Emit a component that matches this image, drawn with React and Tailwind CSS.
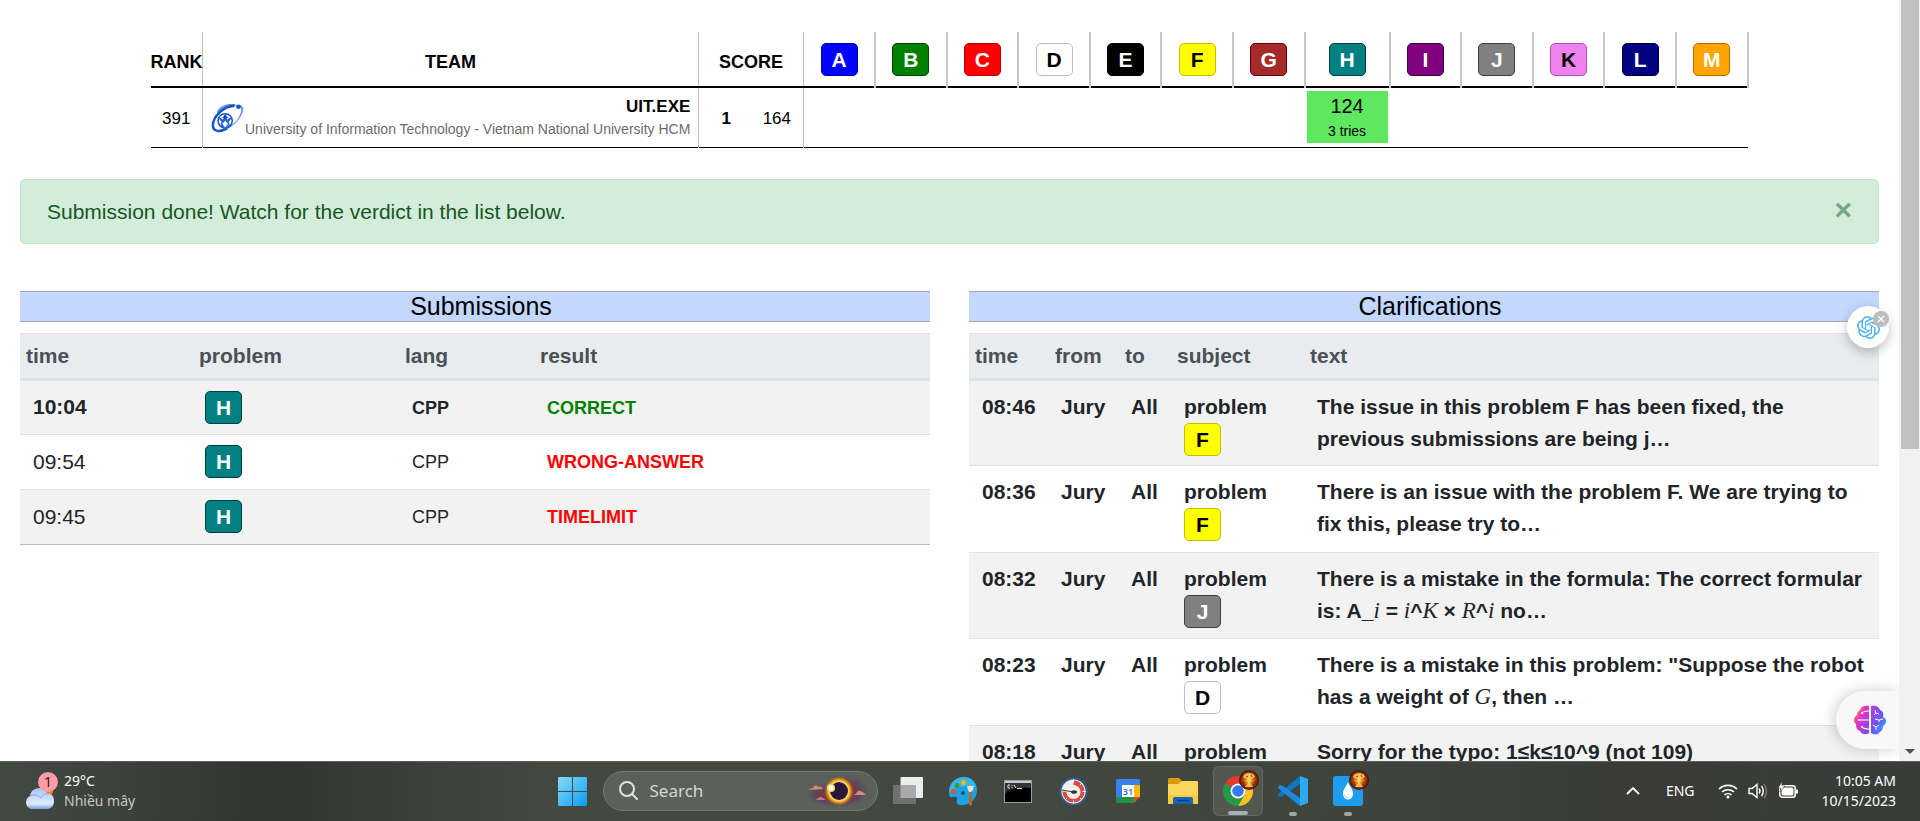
import React from "react";
import { SiOpenai } from "react-icons/si";

const BADGES = {
  A: "bg-[#0000ff] border-[#0000b3] text-white",
  B: "bg-[#008000] border-[#004000] text-white",
  C: "bg-[#ff0000] border-[#b30000] text-white",
  D: "bg-white border-[#bfbfbf] text-black",
  E: "bg-black border-black text-white",
  F: "bg-[#ffff00] border-[#bfbf00] text-black",
  G: "bg-[#a52a2a] border-[#6b0000] text-white",
  H: "bg-[#008080] border-[#004040] text-white",
  I: "bg-[#800080] border-[#400040] text-white",
  J: "bg-[#808080] border-[#404040] text-white",
  K: "bg-[#ee82ee] border-[#b350b3] text-black",
  L: "bg-[#000080] border-[#000040] text-white",
  M: "bg-[#ffa500] border-[#bf6900] text-white",
};

function Badge({ letter }) {
  return (
    <a
      href="#problem"
      className={
        "inline-flex h-[33px] w-[37px] items-center justify-center rounded-[5px] border align-middle text-[21px] font-bold leading-none " +
        BADGES[letter]
      }
    >
      {letter}
    </a>
  );
}

function UniversityLogo() {
  return (
    <svg viewBox="0 0 36 32" className="h-8 w-[34px] shrink-0" fill="none">
      <path d="M6 9C10 2 19 0 25 2c-7 1-13 5-16 11z" fill="#8fa9e6" />
      <path d="M7 10c5-6 11-9 19-8M7 13c4-6 10-9 17-9" stroke="#4f7be0" strokeWidth="1" />
      <path d="M25 3C14 3 2 14 2 24c0 7 8 7 15 3" stroke="#1552cc" strokeWidth="2.6" />
      <path d="M17 27c8-4 14-11 16-18" stroke="#8aa6ea" strokeWidth="1.4" />
      <path d="M24 3c7-2 11 0 10 5-1 4-3 7-6 10 2-4 4-7 4-10 0-4-3-5-8-5z" fill="#6f91e2" />
      <circle cx="29" cy="4" r="2.4" fill="#1552cc" />
      <circle cx="15" cy="19" r="7.5" stroke="#1552cc" strokeWidth="1.6" />
      <path d="M15 11l2 4 5 1-3 4 1 5-5 3-5-3 1-5-3-4 5-1z" fill="#2f66d6" />
      <path d="M15 19l3 3-3 4-3-4z" fill="#fff" />
      <path d="M10 15l3 2M20 15l-3 2" stroke="#fff" strokeWidth="1.2" />
      <circle cx="15" cy="15" r="1.6" fill="#0d3fa8" />
    </svg>
  );
}

const LETTERS = ["A", "B", "C", "D", "E", "F", "G", "H", "I", "J", "K", "L", "M"];

function Scoreboard() {
  return (
    <table className="mx-auto w-full max-w-[1598px] table-fixed border-collapse text-[17px] text-black">
      <colgroup>
        <col className="w-[52px]" />
        <col className="w-[496px]" />
        <col className="w-[55px]" />
        <col className="w-[50px]" />
        {LETTERS.map((l) => (
          <col key={l} className={l === "H" ? "w-[85px]" : ""} />
        ))}
      </colgroup>
      <thead>
        <tr className="h-[55px] border-b-2 border-black text-[18px] font-bold">
          <th className="whitespace-nowrap border-r border-[#c0c0c0] p-0 pt-[6px]">RANK</th>
          <th className="border-r border-[#c0c0c0] p-0 pt-[6px]">TEAM</th>
          <th colSpan={2} className="border-r border-[#c0c0c0] p-0 pt-[6px]">SCORE</th>
          {LETTERS.map((l) => (
            <th key={l} className="border-r-2 border-[#c8c8c8] p-0 align-middle">
              <Badge letter={l} />
            </th>
          ))}
        </tr>
      </thead>
      <tbody>
        <tr className="h-[60px] border-b border-black">
          <td className="border-r border-[#c0c0c0] p-0 pt-[2px] text-center">391</td>
          <td className="border-r border-[#c0c0c0] px-2 py-0 pt-[2px]">
            <div className="flex items-center justify-between">
              <UniversityLogo />
              <div className="text-right">
                <div className="font-bold leading-[22px]">UIT.EXE</div>
                <div className="whitespace-nowrap text-[14px] leading-[22px] text-[#6c6c6c]">
                  University of Information Technology - Vietnam National University HCM
                </div>
              </div>
            </div>
          </td>
          <td className="p-0 pt-[2px] text-center font-bold">1</td>
          <td className="border-r border-[#c0c0c0] p-0 pr-3 pt-[2px] text-right">164</td>
          {LETTERS.map((l) => (
            <td key={l} className="p-0">
              {l === "H" && (
                <div className="mx-[2px] h-[52px] bg-[#60e760] text-center text-[20px] leading-[30px]">
                  124
                  <div className="text-[14px] leading-[20px]">3 tries</div>
                </div>
              )}
            </td>
          ))}
        </tr>
      </tbody>
    </table>
  );
}

function Heading({ children }) {
  return (
    <h2 className="mb-[11px] h-[31px] border-y border-[#a3a7b0] bg-[#c3d7ff] pl-3 text-center text-[25px] leading-[29px] text-black">
      {children}
    </h2>
  );
}

const SUBMISSIONS = [
  { time: "10:04", verdict: "CORRECT", color: "text-[#008000]", fresh: true },
  { time: "09:54", verdict: "WRONG-ANSWER", color: "text-[#ff0000]" },
  { time: "09:45", verdict: "TIMELIMIT", color: "text-[#ff0000]" },
];

const HEAD_ROW = "h-[46px] border-t border-b-[3px] border-[#dee2e6] bg-[#e9ecef] text-left text-[#495057]";

function Submissions() {
  return (
    <section className="min-w-0 flex-1">
      <Heading>Submissions</Heading>
      <table className="w-full table-fixed border-collapse border-b border-[#b9bcbf]">
        <colgroup>
          <col className="w-[173px]" />
          <col className="w-[206px]" />
          <col className="w-[135px]" />
          <col />
        </colgroup>
        <thead>
          <tr className={HEAD_ROW}>
            {["time", "problem", "lang", "result"].map((h) => (
              <th key={h} className="px-[6px] py-0 font-bold">{h}</th>
            ))}
          </tr>
        </thead>
        <tbody>
          {SUBMISSIONS.map((s) => (
            <tr
              key={s.time}
              className={
                "h-[55px] border-b border-[#dee2e6] odd:bg-[#f2f2f2] last:border-[#b9bcbf] " +
                (s.fresh ? "font-bold" : "")
              }
            >
              <td className="px-[13px] py-0">{s.time}</td>
              <td className="px-3 py-0"><Badge letter="H" /></td>
              <td className="px-[13px] py-0 pt-[2px] text-[18px]">CPP</td>
              <td className={"px-[13px] py-0 pt-[2px] text-[18px] font-bold " + s.color}>{s.verdict}</td>
            </tr>
          ))}
        </tbody>
      </table>
    </section>
  );
}

function M({ children }) {
  return <i className="font-['Liberation_Serif',serif] text-[23px] font-normal leading-none">{children}</i>;
}

const CLARIFICATIONS = [
  {
    time: "08:46",
    letter: "F",
    lines: ["The issue in this problem F has been fixed, the", "previous submissions are being j…"],
  },
  {
    time: "08:36",
    letter: "F",
    lines: ["There is an issue with the problem F. We are trying to", "fix this, please try to…"],
  },
  {
    time: "08:32",
    letter: "J",
    lines: [
      "There is a mistake in the formula: The correct formular",
      <>is: A_<M>i</M> = <M>i</M>^<M>K</M> × <M>R</M>^<M>i</M> no…</>,
    ],
  },
  {
    time: "08:23",
    letter: "D",
    lines: ['There is a mistake in this problem: "Suppose the robot', <>has a weight of <M>G</M>, then …</>],
  },
  { time: "08:18", letter: "K", lines: ["Sorry for the typo: 1≤k≤10^9 (not 109)"] },
];

function Clarifications() {
  return (
    <section className="min-w-0 flex-1">
      <Heading>Clarifications</Heading>
      <table className="w-full table-fixed border-collapse">
        <colgroup>
          <col className="w-[80px]" />
          <col className="w-[70px]" />
          <col className="w-[52px]" />
          <col className="w-[133px]" />
          <col />
        </colgroup>
        <thead>
          <tr className={HEAD_ROW}>
            {["time", "from", "to", "subject", "text"].map((h) => (
              <th key={h} className="px-[6px] py-0 font-bold">{h}</th>
            ))}
          </tr>
        </thead>
        <tbody>
          {CLARIFICATIONS.map((c) => (
            <tr
              key={c.time}
              className="h-[86px] border-b border-[#dee2e6] align-top font-bold leading-8 odd:bg-[#f2f2f2] even:h-[87px]"
            >
              <td className="py-0 pl-[13px] pr-0 pt-[10px]">{c.time}</td>
              <td className="py-0 pl-3 pr-0 pt-[10px]">Jury</td>
              <td className="py-0 pl-3 pr-0 pt-[10px]">All</td>
              <td className="py-0 pl-[13px] pr-0 pt-[10px]">
                <div>problem</div>
                <div className="flex h-8"><Badge letter={c.letter} /></div>
              </td>
              <td className="whitespace-nowrap py-0 pl-[13px] pr-0 pt-[10px]">
                {c.lines.map((l, i) => (
                  <div key={i}>{l}</div>
                ))}
              </td>
            </tr>
          ))}
        </tbody>
      </table>
    </section>
  );
}

function Brain() {
  return (
    <svg viewBox="0 0 32 30" className="h-[30px] w-8">
      <defs>
        <linearGradient id="brainL" x1="0" y1="0" x2="1" y2="1">
          <stop offset="0" stopColor="#ffb000" />
          <stop offset=".4" stopColor="#e935c1" />
          <stop offset="1" stopColor="#6a4df5" />
        </linearGradient>
        <linearGradient id="brainR" x1="0" y1="0" x2="1" y2="1">
          <stop offset="0" stopColor="#c13be0" />
          <stop offset=".5" stopColor="#6a56f7" />
          <stop offset="1" stopColor="#22b8ff" />
        </linearGradient>
      </defs>
      <path d="M15 1c-4-1-8 0-9 4-2 1-3 3-3 5-4 3-4 7-1 9 0 4 1 6 4 7 2 4 6 4 9 2z" fill="url(#brainL)" />
      <path d="M17 1c4-1 8 0 9 4 3 1 4 4 3 7 4 2 4 6 0 9 0 3-1 5-3 6-2 3-6 3-9 1z" fill="url(#brainR)" />
      <path d="M15 15H5M15 6c-3 0-5 0-7 2M15 24c-3 0-5 0-7-2" stroke="#fff" strokeWidth="1.1" fill="none" />
      <circle cx="5" cy="15" r="1.1" fill="#fff" />
      <circle cx="8" cy="8" r="1.1" fill="#fff" />
      <circle cx="8" cy="22" r="1.1" fill="#fff" />
      <path
        d="M21 5l1 3-2 2M22 8l3 1M21 14l4 1 4-1M25 15v2M19 20l3 2 3-2M22 22v3"
        stroke="#fff"
        strokeWidth="1"
        fill="none"
      />
    </svg>
  );
}

function WeatherIcon() {
  return (
    <svg viewBox="0 0 36 38" className="h-[38px] w-9 shrink-0">
      <defs>
        <linearGradient id="cloud" x1="0" y1="0" x2="0" y2="1">
          <stop offset="0" stopColor="#a9c4f5" />
          <stop offset=".75" stopColor="#dfeaff" />
          <stop offset="1" stopColor="#7f9fdc" />
        </linearGradient>
      </defs>
      <circle cx="23" cy="19" r="6" fill="#ff7a00" />
      <path d="M7 37a7 7 0 0 1-1-13 9 9 0 0 1 17-3 7 7 0 0 1 7 8c0 5-3 8-7 8z" fill="url(#cloud)" />
      <path d="M6 24c4-2 8-1 11 2 2-4 5-5 10-4" stroke="#86a7e8" strokeWidth="1" fill="none" />
      <circle cx="24" cy="10" r="10" fill="#ff9aa6" />
      <text x="24" y="15" textAnchor="middle" fontSize="14" fill="#2a1c1e">1</text>
    </svg>
  );
}

function Eclipse() {
  return (
    <svg viewBox="0 0 66 32" className="h-8 w-[66px] shrink-0">
      <defs>
        <radialGradient id="sky">
          <stop offset="0" stopColor="#a0402a" />
          <stop offset=".4" stopColor="#7a3545" stopOpacity=".9" />
          <stop offset=".7" stopColor="#5a3d60" stopOpacity=".6" />
          <stop offset="1" stopColor="#5a4a62" stopOpacity="0" />
        </radialGradient>
        <radialGradient id="ring">
          <stop offset=".6" stopColor="#ffe873" />
          <stop offset=".75" stopColor="#f3a51c" />
          <stop offset="1" stopColor="#c25a12" stopOpacity="0" />
        </radialGradient>
      </defs>
      <ellipse cx="30" cy="20" rx="28" ry="12" fill="url(#sky)" />
      <ellipse cx="42" cy="16" rx="24" ry="16" fill="url(#sky)" />
      <circle cx="36" cy="16" r="15" fill="url(#ring)" />
      <circle cx="36" cy="16" r="9" fill="#2b1838" />
      <circle cx="28" cy="13" r="4" fill="#ffd873" />
      <circle cx="28" cy="13" r="2.4" fill="#fff" />
      <path d="M5 15c2-1 3-2 5-2 1-3 4-3 5-1 2-1 4 0 5 2z" fill="#d58a76" />
      <path d="M13 25c1-2 3-2 4-3 2 0 3 1 6 3z" fill="#c07a78" />
      <path d="M50 20c2-1 3-1 4-3 2-2 4-1 5 0 2 0 3 2 4 3z" fill="#d58a76" />
    </svg>
  );
}

function Explosion() {
  return (
    <svg viewBox="0 0 20 20" className="absolute -right-[6px] -top-[6px] h-5 w-5">
      <defs>
        <radialGradient id="blast">
          <stop offset="0" stopColor="#ffdf80" />
          <stop offset=".35" stopColor="#e5861f" />
          <stop offset=".7" stopColor="#9a330a" />
          <stop offset="1" stopColor="#3f0e04" />
        </radialGradient>
      </defs>
      <circle cx="10" cy="10" r="10" fill="url(#blast)" />
      <path d="M4 7c1-3 3-4 6-4s5 1 6 4c-2 1-3 1-4 1l-1 5 3 4H6l3-4-1-5C7 8 5 8 4 7z" fill="#ffcf66" opacity=".85" />
      <path d="M7 6l2 1M12 5l1 2M3 12l3 1M17 12l-3 1M4 15l2-1M16 15l-2-1" stroke="#8f2a08" strokeWidth="1" />
    </svg>
  );
}

function TaskItem({ label, active, running, children }) {
  return (
    <button
      aria-label={label}
      className="flex h-[58px] w-[55px] items-center justify-center"
    >
      <span
        className={
          "relative flex h-[50px] w-[50px] items-center justify-center rounded-md " +
          (active ? "border border-white/10 bg-white/10" : "")
        }
      >
        <span className="relative flex">{children}</span>
        {active && <span className="absolute bottom-0 h-1 w-5 rounded-full bg-[#9fb0b8]" />}
        {running && <span className="absolute bottom-0 h-1 w-2 rounded-full bg-[#a3a5a2]" />}
      </span>
    </button>
  );
}

function Taskbar() {
  return (
    <footer className="grid h-[60px] shrink-0 grid-cols-[1fr_auto_1fr] border-t border-[#5c625b] bg-linear-to-r from-[#434a42] via-[#434840] to-[#383d37] font-['Noto_Sans','Open_Sans',sans-serif] text-[14px] text-white">
      <div className="flex items-center bg-linear-to-r from-transparent via-[#313532] to-transparent pb-[2px] pl-6">
        <WeatherIcon />
        <div className="pl-1 leading-5">
          <div>29°C</div>
          <div className="text-[#c6c9c5]">Nhiều mây</div>
        </div>
      </div>

      <div className="flex items-start">
        <TaskItem label="Start">
          <svg viewBox="0 0 29 29" className="h-[29px] w-[29px]">
            <defs>
              <linearGradient id="win" x1="0" y1="0" x2="1" y2="1">
                <stop offset="0" stopColor="#84dcff" />
                <stop offset="1" stopColor="#0f9bf5" />
              </linearGradient>
            </defs>
            <path d="M1 0h13v14H0V1zM15 0h13l1 1v13H15zM0 15h14v14H1l-1-1zM15 15h14v13l-1 1H15z" fill="url(#win)" />
          </svg>
        </TaskItem>
        <label className="mx-[3px] mt-[9px] flex h-10 w-[275px] items-center rounded-full border border-[#747972] bg-[#5b605a] pl-[14px] pr-2">
          <svg viewBox="0 0 20 20" className="h-5 w-5 shrink-0" fill="none" stroke="#dfe1df" strokeWidth="2">
            <circle cx="9" cy="8" r="7" />
            <path d="M14 13l5 5" strokeLinecap="round" />
          </svg>
          <input
            type="text"
            aria-label="Search"
            placeholder="Search"
            className="min-w-0 flex-1 bg-transparent pl-3 text-[17px] placeholder:text-[#d4d6d3] placeholder:opacity-100"
          />
          <Eclipse />
        </label>
        <TaskItem label="Task view">
          <svg viewBox="0 0 30 28" className="h-7 w-[30px]">
            <rect x="7.5" y="0" width="22.5" height="21" rx="1" fill="#ededed" />
            <rect x="0" y="8" width="23" height="19" rx="1" fill="#70706f" />
            <rect x="7.5" y="8" width="15.5" height="13" fill="#a9a9a9" />
          </svg>
        </TaskItem>
        <TaskItem label="Paint">
          <svg viewBox="0 0 29 29" className="h-[29px] w-[29px]">
            <path d="M15 0C6 0 0 7 0 15c0 5 2 6 4 5 3-1 5 0 4 3-1 4 1 5 5 5 9 0 15-7 15-15S22 0 15 0z" fill="#1ba3e8" />
            <path d="M15 0C6 0 0 7 0 15c7-5 18-8 27-5C25 4 21 0 15 0z" fill="#45bdf2" opacity=".7" />
            <circle cx="4.5" cy="14.5" r="2.5" fill="#e3512a" />
            <circle cx="8" cy="8.5" r="2.5" fill="#2f9e2f" />
            <circle cx="14.5" cy="5.5" r="2.5" fill="#ffb900" />
            <circle cx="14" cy="16" r="2" fill="#1c5478" />
            <path d="M20 15h3v13c-1 1-2 1-3 0z" fill="#b16a1e" />
            <path d="M18 9h7l-1 4-2 2h-2l-1-2z" fill="#f2e2c6" />
          </svg>
        </TaskItem>
        <TaskItem label="Command prompt">
          <svg viewBox="0 0 28 23" className="h-[23px] w-7">
            <rect x=".5" y=".5" width="27" height="22" fill="#000" stroke="#9c9c9f" />
            <rect x="1" y="1" width="26" height="2" fill="#c9c9d0" />
            <path d="M1 14C4 9 14 7 27 8V3H1z" fill="#33343a" />
            <path d="M6 5H4v3h2M8 5v1M8 7v1M10 5l2 3M13 8.500h5" stroke="#ddd" strokeWidth="1" fill="none" />
          </svg>
        </TaskItem>
        <TaskItem label="Timer">
          <svg viewBox="0 0 29 29" className="h-[29px] w-[29px]">
            <circle cx="14.5" cy="14.5" r="14" fill="#2d5f94" />
            <circle cx="14.5" cy="14.5" r="12" fill="#f1efec" />
            <path d="M14.5 3.5A11 11 0 1 1 3.500 14.500l4 0.500A7 7 0 1 0 14.500 8z" fill="#df4b40" />
            <path d="M14.500 2.500v3M14.500 23.500v3M23.500 14.500h3M23 6l-2 2M6 23l2-2M23 23l-2-2" stroke="#fff" strokeWidth="1" />
            <ellipse cx="15" cy="15" rx="3" ry="1.800" fill="#333" />
            <path d="M3 13l11 2" stroke="#444" strokeWidth="1.200" />
          </svg>
        </TaskItem>
        <TaskItem label="Calendar">
          <svg viewBox="0 0 24 24" className="h-6 w-6">
            <path d="M1 0h22l1 1v17H0V1z" fill="#3c7ff0" />
            <path d="M18 6h6v12h-6z" fill="#fbbc04" />
            <path d="M0 18h18v6H1l-1-1z" fill="#1e9247" />
            <path d="M18 18h6l-6 6z" fill="#ea4335" />
            <path d="M6 6h12v12H6z" fill="#fff" />
            <text x="12" y="15.5" textAnchor="middle" fontSize="9" fontWeight="600" fill="#2f6fe0">31</text>
          </svg>
        </TaskItem>
        <TaskItem label="File explorer">
          <svg viewBox="0 0 30 27" className="h-[27px] w-[30px]">
            <path d="M0 1l1-1h10l3 3v3H0z" fill="#d99a0b" />
            <path d="M0 6h10l4-3h15l1 1v22H0z" fill="#ffd65c" />
            <path d="M0 17h30v9H0z" fill="#fcc940" />
            <path d="M5 26v-5q0-2 2-2h16q2 0 2 2v5z" fill="#1168b8" />
            <path d="M9 22.500h12" stroke="#0a3f73" strokeWidth="1.2" />
          </svg>
        </TaskItem>
        <TaskItem label="Chrome" active>
          <svg viewBox="0 0 30 30" className="h-[30px] w-[30px]">
            <path d="M15 15L2 7.500A15 15 0 0 1 28 7.500H15z" fill="#e33b2e" />
            <path d="M15 15l13-7.500A15 15 0 0 1 15 30l6.500-11.300L21 9z" fill="#fcc31e" />
            <path d="M2 7.500A15 15 0 0 0 15 30l6.500-11.300L15 15z" fill="#249a46" />
            <path d="M15 7.500h13v1H15z" fill="#e33b2e" />
            <circle cx="15" cy="15" r="7.5" fill="#fff" />
            <circle cx="15" cy="15" r="5.8" fill="#3878ee" />
          </svg>
          <Explosion />
        </TaskItem>
        <TaskItem label="Visual Studio Code" running>
          <svg viewBox="0 0 30 30" className="h-[30px] w-[30px]">
            <path d="M22 0L0 18v1l2 2 3-1L22 8z" fill="#0d76be" />
            <path d="M0 11l2-2 3 1 17 12v8L0 12z" fill="#1b8cdb" />
            <path d="M22 0l8 3v24l-8 3z" fill="#2ca8f5" />
          </svg>
        </TaskItem>
        <TaskItem label="Water reminder" running>
          <svg viewBox="0 0 30 30" className="h-[30px] w-[30px]">
            <rect width="30" height="30" rx="3" fill="#1e9cf0" />
            <path d="M15 6c2 5 5 7 5 12a5 5.500 0 0 1-10 0c0-5 3-7 5-12z" fill="#fff" />
            <path d="M12 18c0 3 1 4 3 4" stroke="#b9ddf8" strokeWidth="1.2" fill="none" />
          </svg>
          <Explosion />
        </TaskItem>
      </div>

      <div className="flex items-center justify-end bg-linear-to-r from-transparent via-[#3a3b38] to-transparent pb-[2px] pr-6">
        <button aria-label="Show hidden icons" className="mr-[26px]">
          <svg viewBox="0 0 14 8" className="h-2 w-[14px]" fill="none" stroke="#fff" strokeWidth="1.8">
            <path d="M1 7l6-6 6 6" />
          </svg>
        </button>
        <button className="mr-[23px]">ENG</button>
        <button aria-label="Network, volume and battery" className="mr-6 flex items-center gap-[10px]">
          <svg viewBox="0 0 20 16" className="h-4 w-5" fill="none" stroke="#fff" strokeWidth="1.6">
            <path d="M1 6a13 13 0 0 1 18 0M4 9a9 9 0 0 1 12 0M6.500 12a5 5 0 0 1 7 0" />
            <circle cx="10" cy="14" r="1.6" fill="#fff" stroke="none" />
          </svg>
          <svg viewBox="0 0 20 16" className="h-4 w-5" fill="none" stroke="#fff" strokeWidth="1.4">
            <path d="M1 5.500h3L9 1.500v13L4 10.500H1z" />
            <path d="M11 5.500q2 2.500 0 5M13.500 3q3.500 5 0 10" />
            <path d="M16 1q5 7 0 14" stroke="#777" />
          </svg>
          <svg viewBox="0 0 20 17" className="h-[17px] w-5" fill="none">
            <rect x="1.8" y="3.8" width="15.4" height="11.5" rx="2.5" stroke="#fff" strokeWidth="1.5" />
            <rect x="3.5" y="5.500" width="12" height="8" rx="1.500" fill="#fff" />
            <path d="M18 7.500h2v4h-2z" fill="#fff" />
            <path d="M4 0L0 6h3L2 10l5-6H4z" fill="#fff" stroke="#3a3b38" strokeWidth=".6" />
          </svg>
        </button>
        <div className="text-right leading-5">
          <div>10:05 AM</div>
          <div>10/15/2023</div>
        </div>
      </div>
    </footer>
  );
}

export default function App() {
  return (
    <div className="flex h-screen flex-col overflow-hidden bg-white font-['Liberation_Sans',Arial,sans-serif] text-[21px] text-[#212529]">
      <div className="relative flex min-h-0 flex-1">
        <main className="min-w-0 flex-1 overflow-hidden px-5 pt-8">
          <Scoreboard />
          <div
            role="alert"
            className="mt-[31px] flex h-[65px] items-center justify-between rounded-[5px] border border-[#c3e6cb] bg-[#d4edda] px-[26px] pt-[2px] text-[#155724]"
          >
            <span>Submission done! Watch for the verdict in the list below.</span>
            <button aria-label="Close" className="pb-1 text-[30px] font-bold leading-none text-[#76a582]">×</button>
          </div>
          <div className="mt-[47px] flex gap-[39px]">
            <Submissions />
            <Clarifications />
          </div>
        </main>

        <div className="flex w-[21px] shrink-0 flex-col items-center justify-between bg-[#f1f1f1] pb-[7px]">
          <div className="h-[449px] w-[18px] bg-[#c1c1c1]" />
          <svg viewBox="0 0 10 5" className="h-[5px] w-[10px]">
            <path d="M0 0h10L5 5z" fill="#505050" />
          </svg>
        </div>

        <button
          aria-label="Open assistant"
          className="absolute right-[31px] top-[306px] flex h-[42px] w-[42px] items-center justify-center rounded-full bg-white shadow-[0_4px_12px_rgba(0,0,0,0.25)]"
        >
          <SiOpenai className="h-[23px] w-[23px] text-[#4db1f0]" />
          <svg viewBox="0 0 16 16" className="absolute right-0 top-[5px] h-4 w-4">
            <circle cx="8" cy="8" r="8" fill="#bdbdbd" />
            <path d="M5 5l6 6M11 5l-6 6" stroke="#fff" strokeWidth="1.3" />
          </svg>
        </button>
        <button
          aria-label="Open side panel"
          className="absolute bottom-3 right-[21px] flex h-[58px] w-[63px] items-center rounded-l-full bg-[#f8f8f9] pl-[18px] shadow-[-2px_0_14px_rgba(0,0,0,0.2)] [clip-path:inset(-20px_0_-20px_-20px)]"
        >
          <Brain />
        </button>
      </div>
      <Taskbar />
    </div>
  );
}
